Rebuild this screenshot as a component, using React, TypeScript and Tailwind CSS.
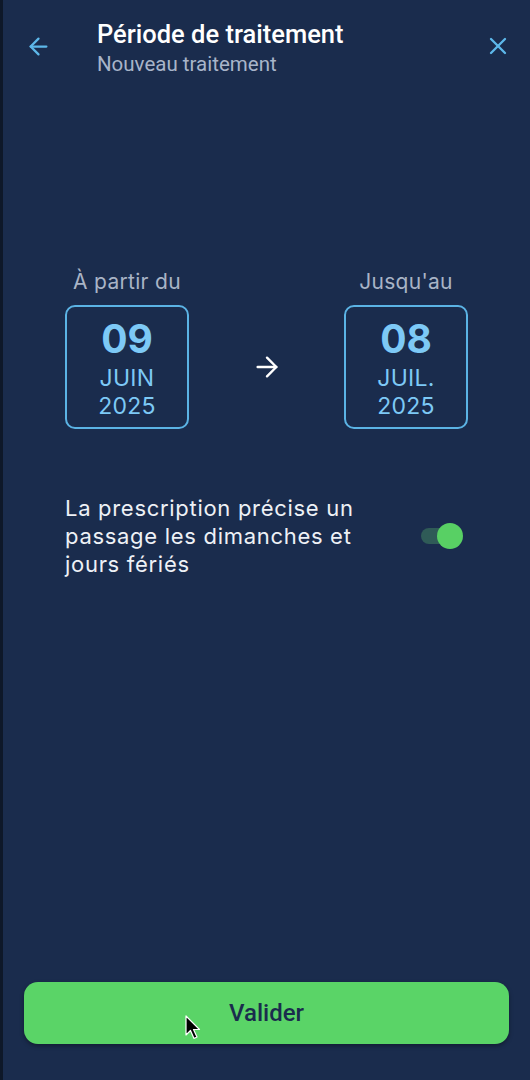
import { ArrowLeft, ArrowRight, X } from 'lucide-react';

function DateBox({ day, month, year }: { day: string; month: string; year: string }) {
  return (
    <div className="flex h-[124px] w-[124px] flex-col items-center rounded-[10px] border-2 border-[#5bb3e4] pt-[11px] text-[#7dc9f6]">
      <span className="text-[39px] leading-[42px] font-bold">{day}</span>
      <span className="mt-[4px] text-[23px] leading-[28px] tracking-[0.3px]">{month}</span>
      <span className="text-[23px] leading-[28px] tracking-[0.3px]">{year}</span>
    </div>
  );
}

function Toggle() {
  return (
    <div className="relative h-[26px] w-[42px]" aria-hidden>
      <span className="absolute top-[5px] left-0 h-[16px] w-[36px] rounded-full bg-[#2f5b57]" />
      <span className="absolute top-0 right-0 h-[26px] w-[26px] rounded-full bg-[#58d064]" />
    </div>
  );
}

function Cursor() {
  return (
    <svg
      className="absolute top-[1015px] left-[185px]"
      width="18"
      height="26"
      viewBox="0 0 18 26"
      aria-hidden
    >
      <path d="M1 1 L1 20 L5.5 15.5 L9 23.5 L12 22 L8.5 14.5 L14.5 14.5 Z" fill="#000" stroke="#fff" strokeWidth="1.2" strokeLinejoin="round" />
    </svg>
  );
}

export default function App() {
  return (
    <div className="relative flex h-[1080px] w-[530px] overflow-hidden bg-[#0e1829] font-['Inter',sans-serif]">
      <div className="ml-[3px] flex flex-1 flex-col bg-[#1a2c4d]">
        <header className="flex h-[92px] items-start pt-[18px] pr-[18px] pl-[22px] font-['Roboto',sans-serif]">
          <button className="mt-[15px] text-[#5db8ea]" aria-label="Retour">
            <ArrowLeft className="h-[27px] w-[27px]" strokeWidth={2} />
          </button>
          <div className="ml-[45px] flex flex-1 flex-col">
            <h1 className="text-[25.5px] leading-[32px] font-medium text-white">Période de traitement</h1>
            <p className="text-[20.5px] leading-[28px] text-[#a8b4c9]">Nouveau traitement</p>
          </div>
          <button className="mt-[14px] text-[#5db8ea]" aria-label="Fermer">
            <X className="h-[28px] w-[28px]" strokeWidth={2} />
          </button>
        </header>

        <div className="mt-[178px] flex items-end justify-between pr-[62px] pl-[62px]">
          <div className="flex flex-col items-center gap-[11px]">
            <span className="text-[21px] leading-[24px] tracking-[0.3px] text-[#a9b4c6]">À partir du</span>
            <DateBox day="09" month="JUIN" year="2025" />
          </div>
          <div className="flex h-[124px] items-center">
            <ArrowRight className="h-[32px] w-[32px] text-white" strokeWidth={1.8} />
          </div>
          <div className="flex flex-col items-center gap-[11px]">
            <span className="text-[21px] leading-[24px] tracking-[0.3px] text-[#a9b4c6]">Jusqu'au</span>
            <DateBox day="08" month="JUIL." year="2025" />
          </div>
        </div>

        <div className="mt-[65px] flex items-center justify-between pr-[67px] pl-[62px]">
          <p className="w-[310px] text-[22px] leading-[28px] tracking-[0.7px] text-[#eef1f6]">
            La prescription précise un passage les dimanches et jours fériés
          </p>
          <Toggle />
        </div>

        <div className="mt-auto px-[21px] pb-[36px]">
          <button className="flex h-[62px] w-full items-center justify-center rounded-[14px] bg-[#5ad467] font-['Roboto',sans-serif] text-[24px] font-medium text-[#1a2c4d] shadow-[0_2px_4px_rgba(0,0,0,0.35)]">
            Valider
          </button>
        </div>
      </div>
      <Cursor />
    </div>
  );
}
